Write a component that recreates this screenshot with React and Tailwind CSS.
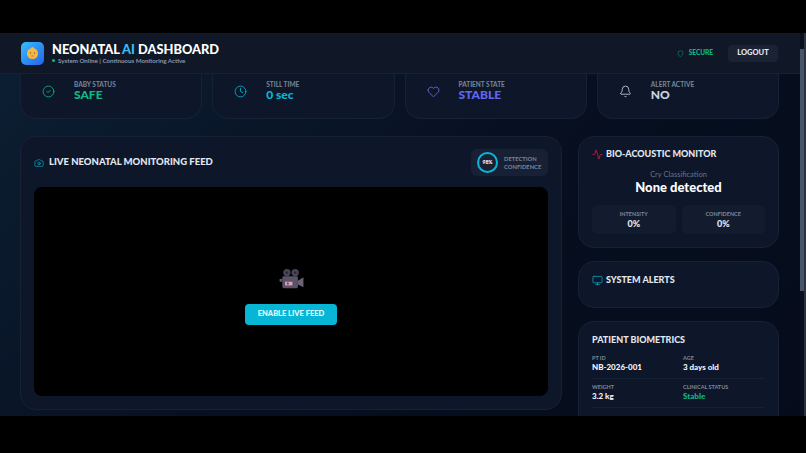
import React from "react";
import { Camera, Activity, Monitor, CircleCheck, Clock, Heart, Bell, Shield } from "lucide-react";

const stats = [
  { label: "BABY STATUS", value: "SAFE", color: "text-[#10b981]", icon: CircleCheck, iconColor: "text-[#10b981]" },
  { label: "STILL TIME", value: "0 sec", color: "text-[#06b6d4]", icon: Clock, iconColor: "text-[#06b6d4]" },
  { label: "PATIENT STATE", value: "STABLE", color: "text-[#6366f1]", icon: Heart, iconColor: "text-[#6d6ff5]" },
  { label: "ALERT ACTIVE", value: "NO", color: "text-[#cbd5e1]", icon: Bell, iconColor: "text-[#cbd5e1]" },
];

function StatCard({ item }) {
  const Icon = item.icon;
  return (
    <div className="flex-1 h-[45px] flex items-start gap-[19px] pl-[21px] pt-[6px] bg-[#0e1729] border border-t-0 border-[#172136] rounded-b-2xl">
      <Icon size={13} className={`${item.iconColor} mt-[5px]`} strokeWidth={1.5} />
      <div>
        <div className="text-[6.5px] leading-[9px] font-bold text-[#7c8799]">{item.label}</div>
        <div className={`text-[12px] leading-[12px] font-black ${item.color}`}>{item.value}</div>
      </div>
    </div>
  );
}

function Bio({ label, value, color }) {
  return (
    <div className="pb-[6px] border-b border-[#172136]">
      <div className="text-[5.5px] leading-[8px] font-bold text-[#7c8799]">{label}</div>
      <div className={`text-[8px] leading-[10px] font-black ${color || "text-[#f1f5f9]"}`}>{value}</div>
    </div>
  );
}

function CameraEmoji() {
  return (
    <svg width="25" height="22" viewBox="0 0 26 24">
      <circle cx="8" cy="5" r="4" fill="#4b4458" />
      <circle cx="8" cy="5" r="1.3" fill="#2b2633" />
      <circle cx="17" cy="5" r="4" fill="#4b4458" />
      <circle cx="17" cy="5" r="1.3" fill="#2b2633" />
      <rect x="0" y="12" width="3" height="3" fill="#5f5870" />
      <rect x="3" y="9" width="17" height="13" rx="1.5" fill="#5a5269" />
      <rect x="6" y="15" width="8" height="4" fill="#d9a5b5" />
      <rect x="8" y="16" width="2" height="2" fill="#6a3b4c" />
      <path d="M20 14l6-4v11l-6-3z" fill="#6a6378" />
    </svg>
  );
}

function BabyLogo() {
  return (
    <svg width="13" height="14" viewBox="0 0 13 14">
      <circle cx="6.5" cy="7.5" r="5.5" fill="#f5b942" />
      <circle cx="6.5" cy="2.5" r="1.5" fill="#f5b942" />
      <circle cx="4.5" cy="7" r="0.7" fill="#8a5a2b" />
      <circle cx="8.5" cy="7" r="0.7" fill="#8a5a2b" />
      <ellipse cx="6.5" cy="10" rx="1.6" ry="1" fill="#e58a5a" />
    </svg>
  );
}

export default function App() {
  return (
    <div className="w-[806px] h-[453px] bg-black flex flex-col overflow-hidden font-['Lato','Liberation_Sans',sans-serif]">
      <div className="h-[33px] shrink-0" />
      <div className="h-[383px] shrink-0 flex">
        <div className="w-[800px] flex flex-col bg-[linear-gradient(135deg,#0c1f33_0%,#070f20_55%,#050b1a_100%)]">
          <header className="h-[41px] shrink-0 flex items-center justify-between pl-[21px] pr-[22px] bg-[#101828] border-b border-[#172136]">
            <div className="flex items-center gap-2">
              <div className="w-[23px] h-[23px] rounded-[5px] bg-[linear-gradient(135deg,#38bdf8,#2563eb)] flex items-center justify-center">
                <BabyLogo />
              </div>
              <div>
                <div className="text-[12.8px] leading-[15px] font-black text-white">
                  NEONATAL <span className="text-[#38bdf8]">AI</span> DASHBOARD
                </div>
                <div className="flex items-center gap-[3px] text-[6.2px] leading-[8px] font-bold text-[#8a95a8]">
                  <span className="w-[3px] h-[3px] rounded-full bg-[#10b981]" />
                  System Online | Continuous Monitoring Active
                </div>
              </div>
            </div>
            <div className="flex items-center gap-[15px]">
              <div className="flex items-center gap-[5px] text-[6.5px] font-black text-[#10b981]">
                <Shield size={7} strokeWidth={1.5} />
                SECURE
              </div>
              <button className="w-[50px] h-[17px] rounded bg-[#1a2233] text-[7.5px] font-black text-[#e2e8f0]">LOGOUT</button>
            </div>
          </header>

          <main className="flex-1 overflow-hidden pl-[20px] pr-[21px] flex flex-col">
            <div className="flex gap-[10px] shrink-0">
              {stats.map((item) => (
                <StatCard key={item.label} item={item} />
              ))}
            </div>

            <div className="flex gap-[16px] mt-[17px] items-start">
              <section className="w-[542px] h-[274px] shrink-0 bg-[#0e1729] border border-[#172136] rounded-2xl px-[13px] pt-[12px]">
                <div className="h-[27px] flex items-center justify-between">
                  <div className="flex items-center gap-[5px]">
                    <Camera size={10} className="text-[#06b6d4]" strokeWidth={1.5} />
                    <h2 className="text-[9.5px] font-black text-[#e2e8f0]">LIVE NEONATAL MONITORING FEED</h2>
                  </div>
                  <div className="w-[77px] h-[27px] rounded-md bg-[#172034] flex items-center gap-[6px] pl-[6px]">
                    <div className="w-[21px] h-[21px] rounded-full border-2 border-[#06b6d4] flex items-center justify-center text-[5px] font-black text-white">98%</div>
                    <div className="text-[5.8px] leading-[7.5px] font-bold text-[#7c8799]">DETECTION<br />CONFIDENCE</div>
                  </div>
                </div>
                <div className="mt-[11px] h-[209px] bg-black rounded-lg flex flex-col items-center justify-center pt-[9px]">
                  <CameraEmoji />
                  <button className="mt-[14px] w-[92px] h-[21px] rounded bg-[#06b6d4] text-[7.5px] font-black text-[#e6fbff]">ENABLE LIVE FEED</button>
                </div>
              </section>

              <aside className="flex-1 flex flex-col gap-[13px]">
                <section className="h-[112px] bg-[#0e1729] border border-[#172136] rounded-2xl px-[13px] pt-[11px]">
                  <div className="flex items-center gap-[3px]">
                    <Activity size={11} className="text-[#e11d48]" strokeWidth={1.5} />
                    <h3 className="text-[9px] leading-[12px] font-black text-[#e2e8f0]">BIO-ACOUSTIC MONITOR</h3>
                  </div>
                  <div className="mt-[10px] text-center text-[7.5px] leading-[10px] text-[#64748b]">Cry Classification</div>
                  <div className="text-center text-[13px] leading-[14px] font-black text-white">None detected</div>
                  <div className="mt-[11px] grid grid-cols-2 gap-[6px]">
                    <div className="h-[29px] rounded-md bg-[#131c2f] flex flex-col items-center justify-center">
                      <div className="text-[5.5px] leading-[7px] font-bold text-[#7c8799]">INTENSITY</div>
                      <div className="text-[9px] leading-[11px] font-black text-[#e2e8f0]">0%</div>
                    </div>
                    <div className="h-[29px] rounded-md bg-[#131c2f] flex flex-col items-center justify-center">
                      <div className="text-[5.5px] leading-[7px] font-bold text-[#7c8799]">CONFIDENCE</div>
                      <div className="text-[9px] leading-[11px] font-black text-[#e2e8f0]">0%</div>
                    </div>
                  </div>
                </section>

                <section className="h-[47px] bg-[#0e1729] border border-[#172136] rounded-2xl px-[13px] pt-[12px]">
                  <div className="flex items-center gap-[3px]">
                    <Monitor size={11} className="text-[#06b6d4]" strokeWidth={1.5} />
                    <h3 className="text-[9px] leading-[12px] font-black text-[#e2e8f0]">SYSTEM ALERTS</h3>
                  </div>
                </section>

                <section className="h-[120px] bg-[#0e1729] border border-[#172136] rounded-2xl px-[13px] pt-[12px]">
                  <h3 className="text-[9px] leading-[12px] font-black text-[#e2e8f0]">PATIENT BIOMETRICS</h3>
                  <div className="mt-[8px] grid grid-cols-[91px_1fr] gap-y-[4px]">
                    <Bio label="PT ID" value="NB-2026-001" />
                    <Bio label="AGE" value="3 days old" />
                    <Bio label="WEIGHT" value="3.2 kg" />
                    <Bio label="CLINICAL STATUS" value="Stable" color="text-[#10b981]" />
                  </div>
                </section>
              </aside>
            </div>
          </main>
        </div>
        <div className="w-[6px] bg-[#0b1020] border-r-2 border-[#2d333d] pt-[16px]">
          <div className="h-[242px] w-[4px] bg-[#475569]" />
        </div>
      </div>
    </div>
  );
}
